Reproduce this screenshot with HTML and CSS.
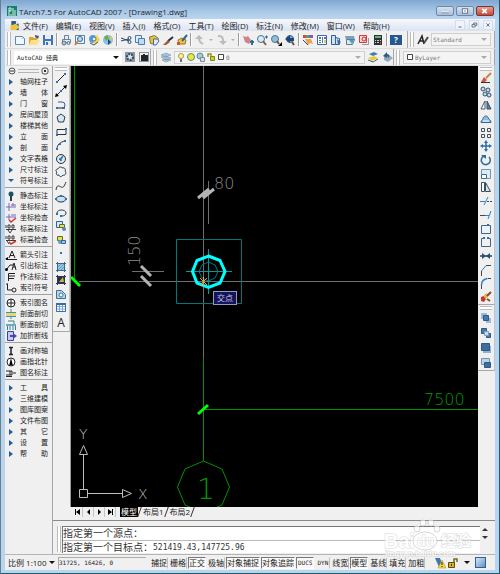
FILE: index.html
```html
<!DOCTYPE html>
<html lang="zh-CN">
<head>
  <meta charset="UTF-8" />
  <meta name="viewport" content="width=device-width, initial-scale=1.0" />
  <title>TArch7.5 For AutoCAD 2007 - [Drawing1.dwg]</title>
  <link rel="stylesheet" href="styles.css">
</head>
<body>
  <div class="window">
    <header class="titlebar">
      <svg class="app-icon" viewBox="0 0 10 12"><path fill="#14806c" d="M0 1h10v10H0z"/><path fill="none" stroke="#d8f4e8" d="M2 9V3h2v3H2M6 3v6M8 5v4M1 10h8"/></svg>
      <h1>TArch7.5 For AutoCAD 2007 - [Drawing1.dwg]</h1>
      <button class="win-btn" aria-label="最小化"><svg viewBox="0 0 18 9"><path stroke="#56687c" d="M5 6.500h8" fill="none"/><path stroke="#fff" d="M5 5.500h8"/></svg></button>
      <button class="win-btn" aria-label="还原"><svg viewBox="0 0 18 9"><rect x="6" y="2" width="6" height="5" fill="#fff" stroke="#56687c"/><path stroke="#56687c" d="M8 4.500h2"/></svg></button>
      <button class="win-btn close" aria-label="关闭"><svg viewBox="0 0 18 9"><path stroke="#fff" stroke-width="2" d="M6 2l5 5M11 2l-5 5"/></svg></button>
    </header>

    <nav class="menubar">
      <svg class="doc-icon" viewBox="0 0 10 12"><path fill="#2d5a96" d="M1 1h5l3 3v7H1z"/><path fill="#f0c43c" d="M0 6l6-2 4 4-4 3H0z"/><path fill="#fff" d="M6 1l3 3H6z"/></svg>
      <a href="#">文件(F)</a>
      <a href="#">编辑(E)</a>
      <a href="#">视图(V)</a>
      <a href="#">插入(I)</a>
      <a href="#">格式(O)</a>
      <a href="#">工具(T)</a>
      <a href="#">绘图(D)</a>
      <a href="#">标注(N)</a>
      <a href="#">修改(M)</a>
      <a href="#">窗口(W)</a>
      <a href="#">帮助(H)</a>
      <div class="doc-buttons">
        <button aria-label="最小化文档"><svg viewBox="0 0 10 10"><path stroke="#46586c" d="M3 7.500h4"/></svg></button>
        <button aria-label="还原文档"><svg viewBox="0 0 10 10"><path fill="none" stroke="#46586c" d="M4.500 4V2.500h4v3H7M2.500 4.500h4v3h-4z"/></svg></button>
        <button aria-label="关闭文档"><svg viewBox="0 0 10 10"><path stroke="#46586c" d="M3 3l4 4M7 3L3 7"/></svg></button>
      </div>
    </nav>

    <div class="toolbars">
      <div class="bar bar-grow">
        <i class="grip"></i>
        <button class="tool" aria-label="新建"><svg viewBox="0 0 12 12"><path fill="#eef8fd" stroke="#5b8cb4" d="M1.500 2.500h7l2 2v6h-9z"/><path fill="#9ccbe6" d="M8 3l2 2H8z"/></svg></button>
        <button class="tool" aria-label="打开"><svg viewBox="0 0 12 12"><path fill="#e0a52c" d="M1 3h4l1 1h3v7H1z"/><path fill="#fbe28a" d="M3 6h9l-3 5H1z"/><path fill="#3b618c" d="M7 1l4 1-1 3-3-2z"/></svg></button>
        <button class="tool" aria-label="保存"><svg viewBox="0 0 12 12"><path fill="#4273b8" d="M1 1h10v10H1z"/><path fill="#e4eefa" d="M3 1h6v4H3zM3 7h6v4H3z"/><path fill="#4273b8" d="M4 8h2v3H4z"/></svg></button>
        <i class="sep"></i>
        <button class="tool" aria-label="打印"><svg viewBox="0 0 12 12"><path fill="#e6eef5" stroke="#6d8294" d="M4.500 1.500h4v4h-4zM2.500 5.500h8v3h-8z"/><circle cx="4" cy="9" r="2" fill="#b5c6d5" stroke="#5a6f82"/><circle cx="8.500" cy="9" r="1.500" fill="#d5e0ea" stroke="#5a6f82"/></svg></button>
        <button class="tool" aria-label="打印预览"><svg viewBox="0 0 12 12"><path fill="#eaf5fc" stroke="#5582a8" d="M1.500 1.500h9v8h-9z"/><circle cx="6" cy="5" r="2.500" fill="#b7def2" stroke="#39678f"/><path stroke="#d0863a" stroke-width="2" d="M4 7l-3 4"/></svg></button>
        <button class="tool" aria-label="发布"><svg viewBox="0 0 12 12"><circle cx="5" cy="5" r="4" fill="#5b9cd2"/><path fill="#f3d34c" d="M4 5l5-4 3 5-5 5z"/><circle cx="6" cy="5" r="2" fill="#e8f2fa" stroke="#4476a5"/><path stroke="#4b5867" d="M2 9l4 2 4-3" fill="none"/></svg></button>
        <button class="tool" aria-label="三维 DWF"><svg viewBox="0 0 12 12"><circle cx="6" cy="6" r="5" fill="#8cc1e6"/><path fill="#62b24a" d="M2 3l3-2 2 3-3 3z"/><path fill="#24476c" d="M6 5l3 3-3 3z"/><path fill="#e8c63f" d="M8 1l3 3-2 3z"/></svg></button>
        <i class="sep"></i>
        <button class="tool" aria-label="剪切"><svg viewBox="0 0 12 12"><path stroke="#29476e" fill="none" d="M1 4l8 3M1 7l8-2"/><circle cx="9.500" cy="4" r="1.500" fill="none" stroke="#29476e"/><circle cx="9.500" cy="8" r="1.500" fill="none" stroke="#29476e"/></svg></button>
        <button class="tool" aria-label="复制"><svg viewBox="0 0 12 12"><path fill="#ddeefa" stroke="#4a7db0" d="M1.500 1.500h6v7h-6z"/><path fill="#bfdcf2" stroke="#4a7db0" d="M4.500 4.500h6v6h-6z"/></svg></button>
        <button class="tool" aria-label="粘贴"><svg viewBox="0 0 12 12"><path fill="#e7c045" stroke="#8b7430" d="M1.500 3l5-1.500 4 3-3 6-5-1z"/><path fill="#dcecf8" stroke="#436f9c" d="M5.500 5h4l1.500 2-3 4H5.500z"/></svg></button>
        <button class="tool" aria-label="特性匹配"><svg viewBox="0 0 12 12"><path stroke="#26303d" stroke-width="2" d="M11 3L6 7"/><path fill="#a5572c" d="M6 6l2 2-4 3-3 0z"/></svg></button>
        <button class="tool" aria-label="块编辑器"><svg viewBox="0 0 12 12"><path fill="#eec93d" stroke="#9b7420" d="M2 6l4-2 4 2-1 4H3z"/><path stroke="#34649e" stroke-width="2" d="M11 1L6 7"/><path fill="#d2582d" d="M1 8h3v3H1z"/></svg></button>
        <i class="sep"></i>
        <button class="tool" aria-label="放弃"><svg viewBox="0 0 12 12"><path fill="none" stroke="#b9bcbf" stroke-width="2" d="M9 10c-1-1-4-1-4-6"/><path fill="#b9bcbf" d="M1 5l4-4 4 4z"/></svg></button>
        <button class="tool tiny" aria-label="放弃列表"><svg viewBox="0 0 6 12"><path fill="#b0b0b0" d="M1 5h4L3 7z"/></svg></button>
        <button class="tool" aria-label="重做"><svg viewBox="0 0 12 12"><path fill="none" stroke="#b9bcbf" stroke-width="2" d="M2 2c4 0 5 1 5 5"/><path fill="#b9bcbf" d="M3 7l4 4 4-4z"/></svg></button>
        <button class="tool tiny" aria-label="重做列表"><svg viewBox="0 0 6 12"><path fill="#b0b0b0" d="M1 5h4L3 7z"/></svg></button>
        <i class="sep"></i>
        <button class="tool" aria-label="实时平移"><svg viewBox="0 0 12 12"><path fill="#d4828a" d="M1 2l3 1 2-1 3 4-2 4-4-2z"/><path stroke="#2f6ba4" stroke-width="2" d="M8 8h4M10 6v5"/></svg></button>
        <button class="tool" aria-label="实时缩放"><svg viewBox="0 0 12 12"><circle cx="5" cy="5" r="3.500" fill="#d5ebf7" stroke="#497394"/><path stroke="#8a643d" stroke-width="2" d="M7 7l3 4"/><path stroke="#27639f" d="M9 3h3M10.500 1.500v3"/></svg></button>
        <button class="tool" aria-label="窗口缩放"><svg viewBox="0 0 12 12"><circle cx="5" cy="5" r="3.500" fill="#8fc1de" stroke="#497394"/><path stroke="#6b5339" stroke-width="2" d="M7 7l2 3"/><path d="M12 8v4H8z"/></svg></button>
        <button class="tool" aria-label="缩放上一个"><svg viewBox="0 0 12 12"><circle cx="6" cy="5" r="3.500" fill="#79b1da" stroke="#37658f"/><path fill="#1e4671" d="M1 5l5-4v3h4v3H6v2z"/><path stroke="#6b5339" stroke-width="2" d="M8 8l2 3"/></svg></button>
        <i class="sep"></i>
        <button class="tool" aria-label="特性"><svg viewBox="0 0 12 12"><path fill="#d94343" d="M1 1h3v3H1z"/><path fill="#4cab4f" d="M4 1h3v3H4z"/><path fill="#8b56c1" d="M7 1h4v3H7z"/><path fill="#e7a44f" d="M3 5h6l2 5-3-1-2 2z"/><path stroke="#444" d="M1 6l5 5"/></svg></button>
        <button class="tool" aria-label="设计中心"><svg viewBox="0 0 12 12"><path fill="#fff" stroke="#3e6aa0" d="M1.500 1.500h9v9h-9z"/><path fill="#4779b5" d="M3 3h2v2H3zM3 6h2v1H3zM3 8h2v1H3zM6 3h1v6H6zM8 3h2v2H8z"/><path fill="#e7c95a" d="M8 6h2v3H8z"/></svg></button>
        <button class="tool" aria-label="工具选项板"><svg viewBox="0 0 12 12"><path fill="#cfe2f4" stroke="#365f96" d="M1.500 1.500h4v9h-4zM5.500 3.500l4 1v6h-4z"/><path fill="#3470b2" d="M7 5l4 3-3 3z"/></svg></button>
        <button class="tool" aria-label="图纸集"><svg viewBox="0 0 12 12"><path fill="#7aa1b5" d="M1 2h9l1 4H2z"/><path fill="#dce8ee" stroke="#5f7f90" d="M2.500 5.500h8l-2 5h-6z"/><path fill="#4b9fcb" d="M5 6h5l-2 4z"/></svg></button>
        <button class="tool" aria-label="标记集"><svg viewBox="0 0 12 12"><path fill="#f7dada" stroke="#d63b3b" d="M1.500 1.500h7v7h-7z"/><circle cx="6" cy="5" r="2" fill="none" stroke="#cf3030"/><path fill="none" stroke="#999" d="M4 10.500h6.500V4"/></svg></button>
        <button class="tool" aria-label="计算器"><svg viewBox="0 0 12 12"><path fill="#2b3337" d="M2 1h8v10H2z"/><path fill="#65b66a" d="M3 2h6v2H3z"/><path fill="#d0d0d0" d="M3 6h1v1H3zM5 6h2v1H5zM8 6h1v1H8zM3 8h1v1H3zM5 8h2v1H5z"/><path fill="#d33" d="M8 8h1v2H8z"/></svg></button>
        <i class="sep"></i>
        <button class="tool help" aria-label="帮助">?</button>
      </div>
      <div class="bar bar-style">
        <i class="grip"></i>
        <button class="tool" aria-label="文字样式"><svg viewBox="0 0 12 12"><path fill="none" stroke="#222" stroke-width="1.500" d="M1 10l4-8 2 8M3 7h4"/><path stroke="#4b4b4b" stroke-width="2" d="M11 3L7 9"/></svg></button>
        <label class="combo disabled"><select aria-label="文字样式控制"><option>Standard</option></select><i class="arrow"></i></label>
      </div>
    </div>

    <div class="toolbars">
      <div class="bar bar-space">
        <i class="grip"></i>
        <label class="combo"><select aria-label="工作空间"><option>AutoCAD 经典</option></select><i class="arrow"></i></label>
        <button class="tool" aria-label="工作空间设置"><svg viewBox="0 0 12 12"><path fill="#8998a6" d="M1 1h10v10H1z"/><circle cx="6" cy="6" r="3" fill="#d5e2ec" stroke="#344452" stroke-width="2" stroke-dasharray="2 1"/></svg></button>
        <button class="tool" aria-label="我的工作空间"><svg viewBox="0 0 12 12"><path fill="none" stroke="#333" stroke-dasharray="1 1" d="M1.500 1.500h9v9h-9z"/><path fill="#1d252d" d="M3 4h7v6H3zM5 3h2v3H5z"/></svg></button>
      </div>
      <div class="bar bar-layer">
        <i class="grip"></i>
        <button class="tool" aria-label="图层特性"><svg viewBox="0 0 12 12"><path fill="#a8c4da" stroke="#6687a4" stroke-width=".5" d="M1 4l5-2 5 2-5 2zM1 6l5-1 5 2-5 2zM2 9l5-1 4 1-5 2z"/></svg></button>
        <label class="combo disabled">
          <svg class="mini" viewBox="0 0 10 10"><circle cx="5" cy="4" r="2.500" fill="#fff798" stroke="#a79a36"/><path fill="#657283" d="M4 7h2v3H4z"/></svg>
          <svg class="mini" viewBox="0 0 10 10"><circle cx="5" cy="5" r="3.500" fill="#f6e528" stroke="#4292a5"/></svg>
          <svg class="mini" viewBox="0 0 10 10"><circle cx="4" cy="4" r="3" fill="#a5cada" stroke="#5f8799"/><path fill="#d5dfe4" stroke="#7d8c95" d="M4.500 5.500h4v4h-4z"/></svg>
          <svg class="mini" viewBox="0 0 10 10"><path fill="none" stroke="#92982a" stroke-width="1.500" d="M2 5V2h3v3"/><path fill="#ccd328" stroke="#81861b" d="M4.500 4.500h4v4h-4z"/></svg>
          <svg class="mini" viewBox="0 0 10 10"><path fill="#fff" stroke="#444" d="M2.500 2.500h5v5h-5z"/></svg>
          <select aria-label="图层控制"><option>0</option></select><i class="arrow"></i>
        </label>
        <button class="tool" aria-label="置为当前图层"><svg viewBox="0 0 12 12"><path fill="#497ca8" d="M2 3l5-2 4 2-5 2z"/><path fill="#e7cd3e" d="M1 7l6-2 4 2-6 3z"/><path stroke="#3c648b" fill="none" d="M1 9l5 2 5-3"/></svg></button>
        <button class="tool" aria-label="上一个图层"><svg viewBox="0 0 12 12"><path fill="#91acc1" d="M3 6l5-2 4 3-5 4-4-2z"/><path fill="#2f5b82" d="M2 5l4-4v2c3 0 3 3 1 4 0-2-1-2-1-2v2z"/></svg></button>
      </div>
      <div class="bar bar-color">
        <i class="grip"></i>
        <label class="combo disabled">
          <svg class="mini" viewBox="0 0 10 10"><path fill="#fff" stroke="#444" d="M2.500 2.500h5v5h-5z"/></svg>
          <select aria-label="颜色控制"><option>ByLayer</option></select><i class="arrow"></i>
        </label>
      </div>
    </div>

    <div class="workspace">
      <aside class="tarch">
        <div class="tarch-head">
          <button aria-label="折叠"><svg viewBox="0 0 8 8"><circle cx="4" cy="4" r="3" fill="none" stroke="#555"/><path stroke="#333" d="M2 4h4"/></svg></button>
          <i></i>
          <button aria-label="关闭面板"><svg viewBox="0 0 8 8"><rect x="1" y="1" width="6" height="6" rx="2" fill="none" stroke="#555"/><path stroke="#333" d="M3 3l2 2M5 3L3 5"/></svg></button>
        </div>
        <ul class="folders">
          <li>轴网柱子</li>
          <li>墙　　体</li>
          <li>门　　窗</li>
          <li>房间屋顶</li>
          <li>楼梯其他</li>
          <li>立　　面</li>
          <li>剖　　面</li>
          <li>文字表格</li>
          <li>尺寸标注</li>
          <li class="open">符号标注</li>
        </ul>
        <ul>
          <li><svg viewBox="0 0 12 10"><circle cx="6" cy="3" r="2.500" fill="#1d5369"/><path stroke="#2c3f4c" stroke-width="2" d="M6 5v5"/></svg>静态标注</li>
          <li><svg viewBox="0 0 12 10"><path fill="none" stroke="#7d68b5" d="M1 5h5M4 1v8M6 3h5M6 5h5M8 1v3"/></svg>坐标标注</li>
          <li><svg viewBox="0 0 12 10"><path fill="none" stroke="#7d68b5" d="M1 4h5M4 1v6M6 2h5M6 4h5"/><path fill="none" stroke="#d03434" stroke-width="1.500" d="M4 7l2 2 5-4"/></svg>坐标检查</li>
          <li><svg viewBox="0 0 12 10"><path fill="none" stroke="#3d3d3d" d="M1 1v3M3 1h2v3H3zM7 1h2v3H7zM1 5.500h10M3 6l2 3 2-3"/></svg>标高标注</li>
          <li><svg viewBox="0 0 12 10"><path fill="none" stroke="#3d3d3d" d="M1 1v3M3 1h2v3H3zM7 1h2v3H7zM1 5.500h10M2 6l2 3"/><path fill="none" stroke="#d03434" stroke-width="1.500" d="M4 7l2 2 5-3"/></svg>标高检查</li>
        </ul>
        <ul>
          <li><svg viewBox="0 0 12 10"><path fill="none" stroke="#222" d="M4 8l3-7 3 7M5 5.500h4M1 9.500h11"/><path d="M0 9l3-2v3z"/></svg>箭头引注</li>
          <li><svg viewBox="0 0 12 10"><path fill="none" stroke="#222" d="M1 9l4-5h3M7 9l2-7 2 7M8 6h3"/><circle cx="1.500" cy="8.500" r="1.500"/></svg>引出标注</li>
          <li><svg viewBox="0 0 12 10"><path fill="none" stroke="#222" d="M3.500 9V1.500H10M4 4h6M4 6.500h5"/></svg>作法标注</li>
          <li><svg viewBox="0 0 12 10"><path fill="none" stroke="#222" d="M1 1h2M2.500 1v6H7"/><circle cx="9" cy="7" r="2" fill="none" stroke="#222"/></svg>索引符号</li>
        </ul>
        <ul>
          <li><svg viewBox="0 0 12 10"><circle cx="6" cy="5" r="4" fill="#fff" stroke="#222"/><path stroke="#222" d="M2 5h8M6 1v8"/></svg>索引图名</li>
          <li><svg viewBox="0 0 12 10"><path fill="#efd36c" d="M1 4h10v3H1z"/><path fill="none" stroke="#3c93ad" d="M1 3.500h10M1 7.500h10M6 0v3M6 8v2"/></svg>剖面剖切</li>
          <li><svg viewBox="0 0 12 10"><path fill="#6faab9" d="M1 4h10v2H1z"/><path fill="none" stroke="#348297" d="M3 1h6v3M2.500 6v4M5 6v4M8 6v4M10.500 6v4"/></svg>断面剖切</li>
          <li><svg viewBox="0 0 12 10"><path fill="#c4c9ee" stroke="#3b3f9d" d="M2.500.5h6v9h-6z"/><path fill="#4448b3" d="M5 4h3V2l4 3-4 3V6H5z"/></svg>加折断线</li>
        </ul>
        <ul>
          <li><svg viewBox="0 0 12 10"><path fill="none" stroke="#222" stroke-width="1.500" d="M4 1.500h4M4 8.500h4M6 1v8"/></svg>画对称轴</li>
          <li><svg viewBox="0 0 12 10"><circle cx="6" cy="5" r="4" fill="#fff" stroke="#222"/><path d="M6 1l2 8-2-1-2 1z"/></svg>画指北针</li>
          <li><svg viewBox="0 0 12 10"><path fill="none" stroke="#222" d="M1 3h4v4H1M5 3h2v4H5M1 8.500h6M8 5h3"/></svg>图名标注</li>
        </ul>
        <ul class="folders">
          <li>工　　具</li>
          <li>三维建模</li>
          <li>图库图案</li>
          <li>文件布图</li>
          <li>其　　它</li>
          <li>设　　置</li>
          <li>帮　　助</li>
        </ul>
      </aside>

      <div class="desk">
        <div class="desk-row">
          <div class="side-tools draw-tools">
            <i class="hgrip"></i>
            <button aria-label="直线"><svg viewBox="0 0 12 12"><path stroke="#222" d="M2 10l8-8"/><path fill="#2873b8" d="M1 9h2v2H1zM9 1h2v2H9z"/></svg></button>
            <button aria-label="构造线"><svg viewBox="0 0 12 12"><path stroke="#222" d="M1 11L11 1"/><path d="M0 12l1-4 3 3zM12 0L8 1l3 3z"/><path fill="#2873b8" d="M5 5h2v2H5z"/></svg></button>
            <button aria-label="多段线"><svg viewBox="0 0 12 12"><path fill="none" stroke="#2f6292" d="M3 3h4a3 3 0 010 6"/><path fill="none" stroke="#222" d="M2 9h6"/><path fill="#2873b8" d="M1 8h2v2H1zM8 8h2v2H8z"/></svg></button>
            <button aria-label="正多边形"><svg viewBox="0 0 12 12"><path fill="#d6e8f4" stroke="#273c50" d="M6 2l4 3-1.500 5h-5L2 5z"/></svg></button>
            <button aria-label="矩形"><svg viewBox="0 0 12 12"><path fill="#edf5fa" stroke="#333" d="M2 3.500h9v5H2z"/><path fill="#2873b8" d="M1 8h2v2H1zM10 2h2v2h-2z"/></svg></button>
            <button aria-label="圆弧"><svg viewBox="0 0 12 12"><path fill="none" stroke="#333" d="M2 10c0-4 3-7 8-8"/><path fill="#2873b8" d="M1 9h2v2H1zM4 4h2v2H4zM9 1h2v2H9z"/></svg></button>
            <button aria-label="圆"><svg viewBox="0 0 12 12"><circle cx="6" cy="6" r="4.500" fill="#d6e8f4" stroke="#333"/><path stroke="#2873b8" stroke-width="1.500" d="M5 7l3-4M4 6h2v2"/></svg></button>
            <button aria-label="修订云线"><svg viewBox="0 0 12 12"><path fill="#eaf3f9" stroke="#333" d="M3 3c1-3 4-2 4-1 3-1 4 2 3 3 2 2 0 5-2 4-2 3-4 1-4 0-3 1-3-2-2-3-2-1-1-3 1-3z"/></svg></button>
            <button aria-label="样条曲线"><svg viewBox="0 0 12 12"><path fill="none" stroke="#333" d="M1 10c1-6 3-4 5-3s3 0 5-5"/></svg></button>
            <button aria-label="椭圆"><svg viewBox="0 0 12 12"><ellipse cx="6" cy="6" rx="4.500" ry="3" fill="#c9e1f2" stroke="#24384c"/><path fill="#2873b8" d="M0 5h2v2H0zM10 5h2v2h-2zM5 2h2v2H5z"/></svg></button>
            <button aria-label="椭圆弧"><svg viewBox="0 0 12 12"><path fill="none" stroke="#273c50" d="M2 6c0-4 9-4 9 0 0 2-2 3-4 3"/><path fill="#2873b8" d="M1 6h2v2H1zM5 8h2v2H5z"/></svg></button>
            <button aria-label="插入块"><svg viewBox="0 0 12 12"><path fill="#d6e8f4" stroke="#28679c" d="M1.500 1.500h6v6h-6z"/><path fill="#e4df56" stroke="#616b25" d="M4.500 4.500h5v3h-5z"/><circle cx="9" cy="9" r="2" fill="#5389b8"/></svg></button>
            <button aria-label="创建块"><svg viewBox="0 0 12 12"><path fill="#e4df56" stroke="#616b25" d="M2.500 2.500h5v4h-5z"/><circle cx="5" cy="8" r="2" fill="#679dc8"/><path fill="#9fc5df" stroke="#28679c" d="M6.500 6.500h4v3h-4z"/></svg></button>
            <button aria-label="点"><svg viewBox="0 0 12 12"><path fill="#2873b8" d="M5 5h2v2H5z"/></svg></button>
            <button aria-label="图案填充"><svg viewBox="0 0 12 12"><path fill="#9fcbe8" d="M2 2h8v8H2z"/><path stroke="#376991" d="M1 2.500h10M1 9.500h10M2.500 1v10M9.500 1v10"/><path stroke="#5c93bd" d="M3 9l6-6M3 6l3-3M6 9l3-3"/></svg></button>
            <button aria-label="渐变色"><svg viewBox="0 0 12 12"><path fill="#232e50" d="M2 2h8v8H2z"/><path fill="#c9b64b" d="M4 8l4-5 1 5z"/><path stroke="#303848" d="M1 2.500h10M1 9.500h10M2.500 1v10M9.500 1v10"/></svg></button>
            <button aria-label="面域"><svg viewBox="0 0 12 12"><path fill="#b6d7ea" stroke="#3c7299" d="M1.500 10.500v-8h5l4 4v4z"/><circle cx="6" cy="7" r="2" fill="#fff" stroke="#3c7299"/></svg></button>
            <button aria-label="表格"><svg viewBox="0 0 12 12"><path fill="#fff" stroke="#7fa9d2" d="M1.500 2.500h9v8h-9zM1.500 5.500h9M1.500 8h9M4.500 3v7M7.500 3v7"/><path fill="none" stroke="#3a6ea6" d="M1.500 2.500h9v8h-9z"/><path fill="#3a6ea6" d="M1 2h10v2H1z"/></svg></button>
            <button class="mtext" aria-label="多行文字">A</button>
          </div>

          <div class="drawing">
            <main class="canvas">
              <svg viewBox="0 0 407 441" preserveAspectRatio="xMinYMin slice">
                <!-- axis grid -->
                <path class="axis" d="M3.500 0v216M132.500 292v103M132.500 343.500H407"/>
                <path class="grey" d="M132.500 0v292M8 215.500h399"/>
                <path class="tick-green" d="M0 211l9 9M127 348l10-9"/>
                <polygon class="axis" points="132.500,395 151,403 158.500,421 151,439 132.500,447 114,439 106.500,421 114,403"/>
                <text class="cad green big" x="126" y="433">1</text>
                <text class="cad green" x="353" y="339">7500</text>

                <!-- offsets from the axes -->
                <path class="grey" d="M137.500 115v43M61 205.500h32"/>
                <path class="tick" d="M127 132l11-9M132 132l11-9M70 200l10 10M70 210l10 10"/>
                <text class="cad" x="143" y="123">80</text>
                <text class="cad" transform="translate(69 200) rotate(-90)">150</text>

                <!-- column being placed -->
                <path class="teal" d="M105.500 173.500h65v64h-65z"/>
                <path class="teal bright" d="M115 205.500h46M137.500 183v45"/>
                <polygon class="teal" points="137.500,196 144,199 147,205.500 144,212 137.500,215 131,212 128,205.500 131,199"/>
                <polygon class="ring" points="137.500,190 149,194.500 154,205.500 149,217 137.500,221.500 126,217 121.500,205.500 126,194.500"/>
                <path class="snap" d="M129 212l7 7M136 212l-7 7M132.500 211v9"/>

                <!-- ucs icon -->
                <path class="ucs" d="M8.500 423.500h8v8h-8zM12.500 423v-35M16 427.500h35M8.500 388.500h8l-4-9zM51.500 423.500v8l9-4z"/>
                <text class="cad ucs-label" x="8" y="373">Y</text>
                <text class="cad ucs-label" x="67" y="433">X</text>
              </svg>
              <span class="tooltip">交点</span>
            </main>
            <div class="layouts">
              <button aria-label="第一个布局"><svg viewBox="0 0 11 10"><path d="M3 2h1v6H3zM8 2v6L4 5z"/></svg></button>
              <button aria-label="上一个布局"><svg viewBox="0 0 11 10"><path d="M7 2v6L4 5z"/></svg></button>
              <button aria-label="下一个布局"><svg viewBox="0 0 11 10"><path d="M4 2v6l3-3z"/></svg></button>
              <button aria-label="最后一个布局"><svg viewBox="0 0 11 10"><path d="M3 2v6l4-3zM7 2h1v6H7z"/></svg></button>
              <a class="tab current" href="#">模型</a>
              <a class="tab" href="#">布局1</a>
              <a class="tab" href="#">布局2</a>
            </div>
          </div>

          <div class="side-tools modify">
            <div class="modify-tools">
              <i class="hgrip"></i>
              <button aria-label="删除"><svg viewBox="0 0 12 12"><path stroke="#c28b3c" stroke-width="2" d="M11 1L6 6"/><path fill="#d25640" d="M4 5l3 3-2 2H1z"/><path stroke="#333" d="M1 10.500h9"/></svg></button>
              <button aria-label="复制对象"><svg viewBox="0 0 12 12"><g fill="#c5dcec" stroke="#36506a"><circle cx="3" cy="3" r="2"/><circle cx="8" cy="4" r="2"/><circle cx="5" cy="8" r="2"/><circle cx="9" cy="9" r="2"/></g></svg></button>
              <button aria-label="镜像"><svg viewBox="0 0 12 12"><path fill="#fff" stroke="#44586c" d="M5 2v8H1z"/><path fill="#5e7f99" stroke="#36506a" d="M7 2v8h4z"/></svg></button>
              <button aria-label="偏移"><svg viewBox="0 0 12 12"><path fill="#8dbde0" stroke="#39688f" d="M1 9.500c0-3 2-2 2-4s4-4 5-1 3 2 3 5z"/><path fill="none" stroke="#fff" d="M3 8h6"/></svg></button>
              <button aria-label="阵列"><svg viewBox="0 0 12 12"><path fill="#f5f5f5" stroke="#44505c" d="M1.500 1.500h3v3h-3zM7.500 1.500h3v3h-3zM1.500 7.500h3v3h-3zM7.500 7.500h3v3h-3z"/></svg></button>
              <button aria-label="移动"><svg viewBox="0 0 12 12"><path stroke="#2e6dab" stroke-width="1.500" d="M6 2v8M2 6h8"/><path fill="#2e6dab" d="M6 0l2 3H4zM6 12l2-3H4zM0 6l3-2v4zM12 6L9 4v4z"/></svg></button>
              <button aria-label="旋转"><svg viewBox="0 0 12 12"><path fill="none" stroke="#2f699b" stroke-width="1.500" d="M4 2a4.500 4.500 0 105 1"/><path fill="#2f699b" d="M1 1h5v4z"/></svg></button>
              <button aria-label="缩放"><svg viewBox="0 0 12 12"><path fill="#dcecf6" stroke="#6f96b5" d="M1.500 1.500h9v9h-9z"/><path fill="#fff" stroke="#3f6d94" d="M1.500 6.500h5v4h-5z"/></svg></button>
              <button aria-label="拉伸"><svg viewBox="0 0 12 12"><path fill="#fff" stroke="#3c4e60" d="M1.500 1.500h3v9h-3z"/><path fill="#d0e3f0" stroke="#3c4e60" d="M5.500 1.500l5 9h-5z"/></svg></button>
              <button aria-label="修剪"><svg viewBox="0 0 12 12"><path stroke="#3281c4" d="M0 6.500h5"/><path stroke="#444" stroke-dasharray="2 1" d="M7 6.500h5"/><path stroke="#3281c4" d="M4 10l4-8"/></svg></button>
              <button aria-label="延伸"><svg viewBox="0 0 12 12"><path stroke="#444" d="M0 6.500h5"/><path stroke="#3281c4" d="M5 6.500h4M8 10l3-8"/></svg></button>
              <button aria-label="打断于点"><svg viewBox="0 0 12 12"><path fill="#e9f3fa" stroke="#49637c" d="M1.500 2.500h9v8h-9z"/><path fill="#2873b8" d="M7 1h2v2H7z"/></svg></button>
              <button aria-label="打断"><svg viewBox="0 0 12 12"><path fill="none" stroke="#49637c" d="M4 2.500H1.500v8h9v-8H8"/><path fill="#2873b8" d="M3 1h2v2H3zM7 1h2v2H7z"/></svg></button>
              <button aria-label="合并"><svg viewBox="0 0 12 12"><path stroke="#2c4356" stroke-width="1.500" d="M0 6h12"/><path fill="#23537a" d="M2 3l4 3-4 3zM10 3L6 6l4 3z"/></svg></button>
              <button aria-label="倒角"><svg viewBox="0 0 12 12"><path fill="none" stroke="#444" d="M1.500 12V7M6 1.500h5"/><path stroke="#3281c4" d="M1.500 7L6 1.500"/></svg></button>
              <button aria-label="圆角"><svg viewBox="0 0 12 12"><path fill="none" stroke="#444" d="M1.500 12V8M8 1.500h3"/><path fill="none" stroke="#3281c4" stroke-width="1.500" d="M1.500 8c0-4 3-6 6-6.500"/></svg></button>
              <button aria-label="分解"><svg viewBox="0 0 12 12"><path fill="#c93434" d="M1 6l3-1 2 3-2 3-3-1z"/><path fill="#e7b630" d="M4 4l3-2 1 4-3 2z"/><path stroke="#8a4a2a" stroke-width="2" d="M7 5l4-4M7 8l3 2"/></svg></button>
            </div>
            <div class="order-tools">
              <i class="hgrip"></i>
              <button aria-label="前置"><svg viewBox="0 0 12 12"><path fill="#9dbbd6" d="M1 1h6v6H1zM6 6h5v5H6z"/><path fill="#4878ad" stroke="#2f5a88" d="M3.500 3.500h5v5h-5z"/></svg></button>
              <button aria-label="后置"><svg viewBox="0 0 12 12"><path fill="#4878ad" stroke="#2f5a88" d="M1.500 1.500h5v5h-5zM6.500 6.500h4v4h-4z"/><path fill="#c8dcec" stroke="#7d9fbe" d="M4.500 4.500h4v4h-4z"/></svg></button>
              <button aria-label="置于对象之上"><svg viewBox="0 0 12 12"><path fill="#8fb2d0" d="M3 4h8v7H3z"/><path fill="#3e6da1" stroke="#2f5a88" d="M1.500 1.500h8v7h-8z"/></svg></button>
              <button aria-label="置于对象之下"><svg viewBox="0 0 12 12"><path fill="#bcd3e6" stroke="#6e93b5" d="M1.500 1.500h8v6h-8z"/><path fill="#3e6da1" stroke="#2f5a88" d="M4.500 5.500h6v5h-6z"/></svg></button>
            </div>
          </div>
        </div>

        <section class="command">
          <i class="grip"></i>
          <div class="lines">
            <p>指定第一个源点：</p>
            <label for="cmd">指定第一个目标点：<input id="cmd" type="text" value="521419.43,147725.96"></label>
          </div>
          <div class="scroll"><i class="up"></i><i class="down"></i></div>
        </section>
      </div>
    </div>

    <footer class="status">
      <button class="scale">比例 1:100<i class="arrow"></i></button>
      <output class="coords">31725, 16426, 0</output>
      <button>捕捉</button>
      <button>栅格</button>
      <button class="on">正交</button>
      <button>极轴</button>
      <button class="on">对象捕捉</button>
      <button class="on">对象追踪</button>
      <button class="on latin">DUCS</button>
      <button class="latin">DYN</button>
      <button>线宽</button>
      <button class="on">模型</button>
      <button>基线</button>
      <button>填充</button>
      <button>加粗</button>
      <div class="tray">
        <svg viewBox="0 0 12 12"><path fill="#3b77b5" d="M1 1h5l3 9H5z"/><path fill="#f6dc3b" stroke="#a58a1d" stroke-width=".5" d="M8 3l4 8H4z"/><path stroke="#222" d="M8 5v3M8 9v1"/></svg>
        <svg viewBox="0 0 12 12"><path fill="none" stroke="#77651c" stroke-width="1.500" d="M7 6V2h3v3"/><path fill="#d4b229" stroke="#5e4d10" d="M1.500 5.500h6v5h-6z"/><path fill="#43370d" d="M4 7h1v2H4z"/></svg>
        <i class="arrow"></i>
        <button class="clean" aria-label="全屏显示"></button>
      </div>
    </footer>

    <svg class="watermark" viewBox="0 0 96 46">
      <g fill="#fff" stroke="#cfcfcf">
        <text class="wm-big" x="1" y="29">Bai</text>
        <ellipse cx="42" cy="22" rx="12" ry="9"/>
        <circle cx="34" cy="10" r="3"/><circle cx="40" cy="4" r="3"/><circle cx="48" cy="4" r="3"/><circle cx="54" cy="10" r="3"/>
        <text class="wm-du" x="34" y="27">du</text>
        <text class="wm-cn" x="58" y="27">经验</text>
        <text class="wm-url" x="2" y="37">jingyan.baidu.com</text>
      </g>
    </svg>
  </div>
</body>
</html>
```

FILE: styles.css
```css
* {
  box-sizing: border-box;
}

body {
  margin: 0;
  background: #12606f;
  font-family: "Open Sans", "Noto Sans CJK SC", sans-serif;
  font-size: 8px;
  line-height: 11px;
  color: #222;
}

button,
select,
input {
  margin: 0;
  padding: 0;
  border: 0;
  background: none;
  font: inherit;
  color: inherit;
}

button {
  flex: none;
  cursor: pointer;
}

svg {
  display: block;
  flex: none;
}

a {
  color: inherit;
  text-decoration: none;
}

i {
  flex: none;
}

.window {
  position: relative;
  display: flex;
  flex-direction: column;
  min-height: 100vh;
  padding: 0 4px 3px 4px;
  border-right: 1px solid #12606f;
  border-left: 1px solid #6c7f90;
  border-bottom: 1px solid #12606f;
  background: #b8d4ee;
}

/* title bar */
.titlebar {
  display: flex;
  align-items: center;
  gap: 2px;
  height: 19px;
  margin: 0 -4px;
  padding: 3px 5px 0 6px;
  background: linear-gradient(#7fa8d2, #a9c8e6 60%, #bdd5ee);
}

.titlebar h1 {
  flex: 1;
  margin: 0;
  font-size: 8px;
  font-weight: normal;
  color: #1c2733;
  white-space: nowrap;
}

.app-icon {
  width: 10px;
  height: 12px;
}

.win-btn {
  width: 18px;
  height: 10px;
  border: 1px solid #6f88a3;
  border-radius: 2px;
  background: linear-gradient(#d5e2f0, #a9c0d9);
}

.win-btn svg {
  width: 100%;
  height: 8px;
}

.close {
  border-color: #7c3630;
  background: linear-gradient(#e3a092, #c6493a);
}

/* menu bar */
.menubar {
  display: flex;
  align-items: center;
  gap: 8px;
  height: 12px;
  padding-left: 5px;
  background: linear-gradient(#f6f8fc, #dbe3f2);
  white-space: nowrap;
}

.doc-icon {
  width: 10px;
  height: 11px;
  margin-right: -5px;
}

.doc-buttons {
  display: flex;
  gap: 4px;
  margin-left: auto;
  padding-right: 2px;
}

.doc-buttons button {
  width: 10px;
  height: 10px;
  border: 1px solid #d3deec;
  background: #eff4fa;
}

.doc-buttons svg {
  width: 8px;
  height: 8px;
}

/* toolbars */
.toolbars {
  display: flex;
  height: 18px;
  background: #f0f0f0;
  border-bottom: 1px solid #dcdcdc;
}

.toolbars:nth-of-type(2) {
  height: 17px;
}

.bar {
  display: flex;
  align-items: center;
  gap: 2px;
  padding-left: 2px;
  border-right: 1px solid #a8a8a8;
}

.bar-grow {
  flex: 1;
}

.bar-style {
  width: 87px;
  padding-right: 3px;
}

.bar-space {
  width: 146px;
}

.bar-layer {
  flex: 1;
}

.bar-color {
  width: 101px;
  padding-right: 3px;
}

.grip {
  width: 4px;
  height: 15px;
  margin-right: 1px;
  border: solid #bcbcbc;
  border-width: 0 1px;
  background: #fff;
}

.sep {
  width: 2px;
  height: 13px;
  border-left: 1px solid #9c9c9c;
  background: #fff;
}

.tool,
.tool svg {
  width: 12px;
  height: 12px;
}

.tool.tiny,
.tool.tiny svg {
  width: 6px;
}

.help {
  height: 10px;
  background: #24588f;
  color: #fff;
  font-weight: bold;
  line-height: 10px;
}

.combo {
  display: flex;
  align-items: center;
  flex: 1;
  min-width: 0;
  height: 13px;
  padding: 0 3px;
  background: #fff;
  font-family: "DejaVu Sans Mono", "Noto Sans CJK SC", monospace;
  font-size: 6px;
}

.combo select {
  flex: 1;
  min-width: 0;
  appearance: none;
  outline: none;
}

.disabled {
  padding: 0 3px 0 1px;
  border: 1px solid #cfcfcf;
  background: #f4f4f4;
  color: #777;
}

.mini {
  width: 10px;
  height: 10px;
}

.arrow {
  width: 0;
  border: solid transparent;
  border-top-color: #111;
  border-width: 3px 3px 0;
}

.disabled .arrow {
  border-top-color: #aaa;
}

/* work area */
.workspace {
  display: flex;
  flex: 1;
  background: #f0f0f0;
}

.tarch {
  width: 48px;
  border-right: 1px solid #a5a5a5;
  font-size: 7px;
  white-space: nowrap;
}

.tarch ul {
  margin: 0;
  padding: 0;
  list-style: none;
}

.tarch ul + ul {
  margin-top: 1px;
  padding-top: 2px;
  border-top: 1px solid #a0a0a0;
}

.tarch li {
  display: flex;
  align-items: center;
  gap: 3px;
  height: 11px;
}

.tarch li svg {
  width: 12px;
  height: 10px;
}

.folders li::before {
  content: "";
  width: 0;
  margin: 0 4px;
  border: solid transparent;
  border-left-color: #1e5e9e;
  border-width: 3px 0 3px 4px;
}

.folders .open::before {
  border-color: #1e5e9e transparent transparent;
  border-width: 3px 3px 0;
  margin: 0 3px;
}

.tarch-head {
  display: flex;
  align-items: center;
  gap: 2px;
  height: 10px;
  padding: 0 3px;
}

.tarch-head i {
  flex: 1;
  height: 4px;
  border: solid #b4b4b4;
  border-width: 1px 0;
}

.tarch-head svg {
  width: 8px;
  height: 8px;
}

.desk {
  display: flex;
  flex-direction: column;
  flex: 1;
  min-width: 0;
}

.desk-row {
  display: flex;
  flex: 1;
}

.side-tools {
  width: 17px;
}

.draw-tools,
.modify-tools,
.order-tools {
  display: flex;
  flex-direction: column;
  align-items: center;
  padding: 0 2px;
  border-right: 1px solid #c4c4c4;
  border-bottom: 1px solid #a8a8a8;
}

.draw-tools {
  align-self: flex-start;
  height: 266px;
}

.modify-tools {
  height: 239px;
}

.order-tools {
  height: 66px;
}

.hgrip {
  width: 12px;
  height: 4px;
  margin-top: 1px;
  border: solid #bcbcbc;
  border-width: 1px 0;
  background: #fff;
}

.side-tools button {
  display: flex;
  flex: 1;
  align-items: center;
}

.side-tools svg {
  width: 12px;
  height: 12px;
}

.side-tools .mtext {
  font: 12px "Open Sans", sans-serif;
}

.drawing {
  display: flex;
  flex-direction: column;
  flex: 1;
  min-width: 0;
}

.canvas {
  position: relative;
  flex: 1;
  min-height: 441px;
  border-left: 1px solid #9a9a9a;
  background: #000;
  overflow: hidden;
}

.canvas svg {
  width: 100%;
}

.canvas path,
.canvas polygon {
  fill: none;
}

.axis {
  stroke: #009000;
}

.grey {
  stroke: #6e6e6e;
}

.tick {
  stroke: #b4b4b4;
  stroke-width: 3;
}

.tick-green {
  stroke: #00ff00;
  stroke-width: 3;
}

.teal {
  stroke: #007878;
}

.bright {
  stroke: #009c9c;
}

.ring {
  stroke: #00ffff;
  stroke-width: 3;
}

.snap {
  stroke: #f0a040;
}

.ucs {
  stroke: #bdbdbd;
}

.cad {
  fill: #8a8a8a;
  font-family: "DejaVu Sans", sans-serif;
  font-size: 16px;
  font-weight: 200;
}

.green {
  fill: #009a00;
}

.big {
  font-size: 28px;
}

.ucs-label {
  fill: #bdbdbd;
  font-size: 14px;
}

.tooltip {
  position: absolute;
  top: 225px;
  left: 142px;
  padding: 0 3px;
  border: 1px solid #9a9ac0;
  background: #14145c;
  color: #c8c8e0;
  line-height: 12px;
}

.layouts {
  display: flex;
  height: 10px;
  padding-left: 2px;
  font-size: 8px;
  line-height: 10px;
}

.layouts button {
  width: 11px;
  border-right: 1px solid #c4c4c4;
}

.layouts svg {
  width: 11px;
  height: 10px;
}

.tab {
  position: relative;
  margin-left: 4px;
  padding: 0 1px;
}

/* slanted tab edge */
.tab::after {
  content: "";
  position: absolute;
  top: 0;
  right: -2px;
  height: 10px;
  border-right: 1px solid #333;
  transform: skewX(-20deg);
}

.current {
  background: #000;
  color: #fff;
}

/* command window */
.command {
  display: flex;
  height: 34px;
  margin-top: 3px;
  padding: 5px 5px 1px 4px;
  border-top: 1px solid #8a8a8a;
}

.command .grip {
  height: 26px;
}

.lines {
  flex: 1;
  min-width: 0;
  border: solid #777;
  border-width: 1px 0 0 1px;
  background: #fff;
  font-size: 10px;
  line-height: 13px;
  color: #333;
}

.lines p {
  height: 14px;
  margin: 0;
  border-bottom: 1px solid #bbb;
}

.lines label {
  display: flex;
  align-items: center;
  height: 12px;
}

.lines input {
  flex: 1;
  min-width: 0;
  font: 8px "DejaVu Sans Mono", monospace;
  outline: none;
}

.scroll {
  display: flex;
  flex-direction: column;
  justify-content: space-around;
  width: 10px;
  height: 15px;
  padding-left: 2px;
}

.up,
.down {
  width: 0;
  border: solid transparent;
  border-width: 0 3px 3px;
  border-bottom-color: #333;
}

.down {
  border-width: 3px 3px 0;
  border-top-color: #333;
}

/* status bar */
.status {
  display: flex;
  align-items: center;
  gap: 1px;
  height: 16px;
  padding-left: 3px;
  border-top: 1px solid #b4b4b4;
  background: #f0f0f0;
  white-space: nowrap;
}

.status button {
  height: 12px;
  border: 1px solid #f0f0f0;
  border-right-color: #c0c0c0;
  line-height: 10px;
}

.status .on {
  border-color: #777 #fff #fff #777;
  background: #f8f8f8;
}

.status .scale {
  display: flex;
  align-items: center;
  gap: 3px;
  width: 49px;
  border: 0;
}

.coords {
  flex: none;
  width: 88px;
  height: 12px;
  margin-right: 3px;
  border: solid #aaa;
  border-width: 1px 0 0 1px;
  font: 6px/10px "DejaVu Sans Mono", monospace;
}

.status .latin {
  padding: 0 1px;
  font: 6px/10px "DejaVu Sans Mono", monospace;
}

.tray {
  display: flex;
  align-items: center;
  gap: 1px;
  margin-left: auto;
  padding-right: 9px;
}

.tray svg {
  width: 12px;
  height: 12px;
}

.tray .arrow {
  margin: 0 4px;
}

.status .clean {
  width: 11px;
  height: 11px;
  border: 1px solid #2f5f95;
  background: linear-gradient(135deg, #d6e8f8, #5e92c8);
}

.watermark {
  position: absolute;
  right: 20px;
  bottom: 8px;
  width: 96px;
  height: 46px;
  opacity: 0.8;
  pointer-events: none;
}

.watermark text {
  font-family: "Liberation Sans", "Noto Sans CJK SC", sans-serif;
  font-weight: bold;
  paint-order: stroke;
}

.wm-big {
  font-size: 20px;
}

.wm-du {
  font-size: 14px;
}

.wm-cn {
  font-size: 15px;
}

.wm-url {
  font-size: 8px;
}
```
